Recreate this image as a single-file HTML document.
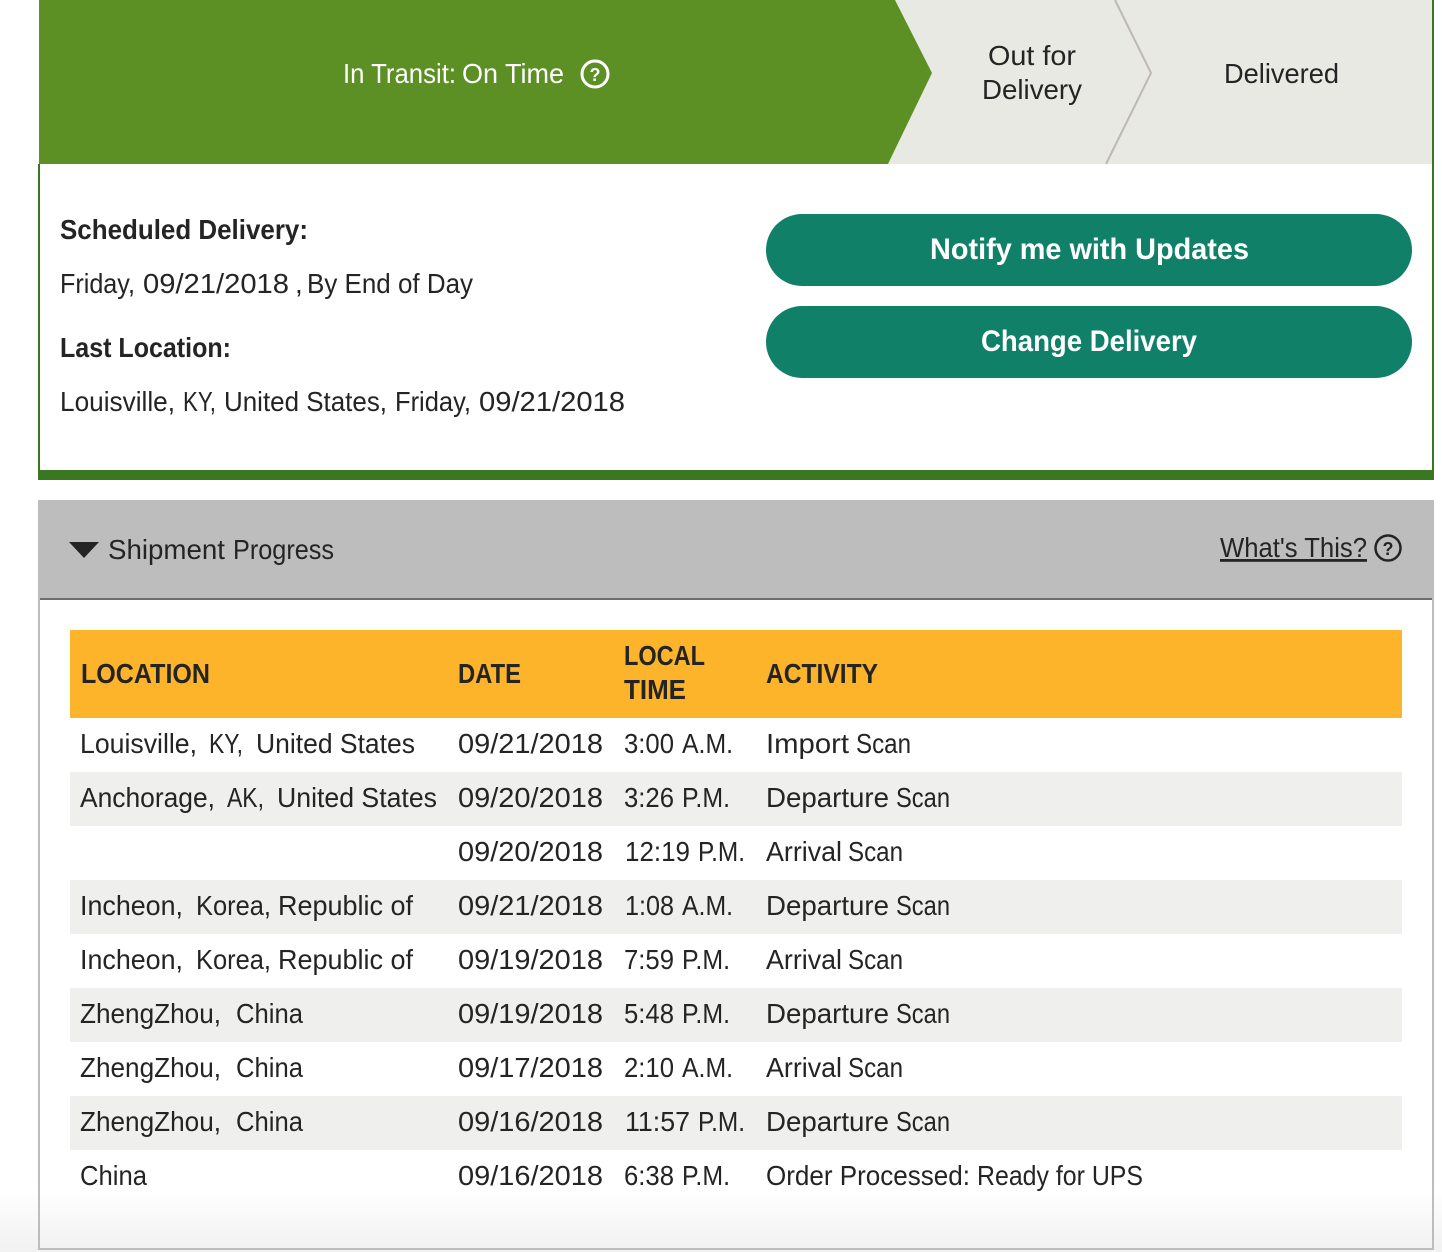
<!DOCTYPE html>
<html lang="en">
<head>
<meta charset="utf-8">
<title>Shipment Progress</title>
<style>
html,body{margin:0;padding:0;width:1442px;height:1252px;overflow:hidden;background:#fff}
svg{display:block}
text{font-family:"Liberation Sans",Arial,sans-serif;font-size:28px;fill:#242424;transform:translateY(-1px)}
.b{font-weight:bold}
.w{fill:#fff}
text.q{transform:none;font-size:18px;font-weight:bold}
</style>
</head>
<body>
<svg width="1442" height="1252" viewBox="0 0 1442 1252" xmlns="http://www.w3.org/2000/svg">
<defs>
<linearGradient id="fade" x1="0" y1="0" x2="0" y2="1">
<stop offset="0" stop-color="#fff"/>
<stop offset="1" stop-color="#f1f1f1"/>
</linearGradient>
</defs>
<rect width="1442" height="1252" fill="#fff"/>
<rect x="0" y="1190" width="1442" height="62" fill="url(#fade)"/>

<!-- Status tracker -->
<rect x="39" y="0" width="1394" height="164" fill="#e9e9e4"/>
<polygon points="39,0 895,0 932,73 888,164 39,164" fill="#5c9025"/>
<polyline points="1115,0 1151,73 1106,164" fill="none" stroke="#bdb8b1" stroke-width="2"/>
<text class="w" x="343" y="84" textLength="113" lengthAdjust="spacingAndGlyphs">In Transit:</text>
<text class="w" x="462" y="84" textLength="102" lengthAdjust="spacingAndGlyphs">On Time</text>
<circle cx="595" cy="74" r="13" fill="none" stroke="#fff" stroke-width="3"/>
<text class="q w" x="595" y="81" text-anchor="middle">?</text>
<text x="988" y="66" textLength="88" lengthAdjust="spacingAndGlyphs">Out for</text>
<text x="982" y="100" textLength="100" lengthAdjust="spacingAndGlyphs">Delivery</text>
<text x="1224" y="84" textLength="115" lengthAdjust="spacingAndGlyphs">Delivered</text>

<!-- Summary panel -->
<rect x="38" y="164" width="2" height="306" fill="#3a7722"/>
<rect x="1432" y="0" width="2" height="470" fill="#3a7722"/>
<rect x="38" y="470" width="1396" height="10" fill="#3a7722"/>
<text class="b" x="60" y="240" textLength="248" lengthAdjust="spacingAndGlyphs">Scheduled Delivery:</text>
<text x="60" y="294" textLength="75" lengthAdjust="spacingAndGlyphs">Friday,</text>
<text x="143" y="294" textLength="146" lengthAdjust="spacingAndGlyphs">09/21/2018</text>
<text x="295" y="294">,</text>
<text x="307" y="294" textLength="166" lengthAdjust="spacingAndGlyphs">By End of Day</text>
<text class="b" x="60" y="358" textLength="171" lengthAdjust="spacingAndGlyphs">Last Location:</text>
<text x="60" y="412" textLength="115" lengthAdjust="spacingAndGlyphs">Louisville,</text>
<text x="183" y="412" textLength="33" lengthAdjust="spacingAndGlyphs">KY,</text>
<text x="224" y="412" textLength="163" lengthAdjust="spacingAndGlyphs">United States,</text>
<text x="395" y="412" textLength="76" lengthAdjust="spacingAndGlyphs">Friday,</text>
<text x="479" y="412" textLength="146" lengthAdjust="spacingAndGlyphs">09/21/2018</text>
<rect x="766" y="214" width="646" height="72" rx="36" ry="36" fill="#118069"/>
<rect x="766" y="306" width="646" height="72" rx="36" ry="36" fill="#118069"/>
<text class="b w" x="930" y="260" textLength="319" lengthAdjust="spacingAndGlyphs" style="font-size:30px">Notify me with Updates</text>
<text class="b w" x="981" y="352" textLength="216" lengthAdjust="spacingAndGlyphs" style="font-size:30px">Change Delivery</text>

<!-- Shipment progress panel -->
<rect x="38" y="500" width="1396" height="98" fill="#bdbdbd"/>
<rect x="38" y="598" width="2" height="652" fill="#bdbdbd"/>
<rect x="1432" y="598" width="2" height="652" fill="#bdbdbd"/>
<rect x="38" y="1248" width="1396" height="2" fill="#bdbdbd"/>
<rect x="40" y="598" width="1392" height="2" fill="#6e6e6e"/>
<polygon points="69,542 99,542 84,558" fill="#242424"/>
<text x="108" y="560" textLength="117" lengthAdjust="spacingAndGlyphs">Shipment</text>
<text x="233" y="560" textLength="101" lengthAdjust="spacingAndGlyphs">Progress</text>
<text x="1220" y="558" textLength="147" lengthAdjust="spacingAndGlyphs" text-decoration="underline">What's This?</text>
<circle cx="1388" cy="548" r="12.5" fill="none" stroke="#242424" stroke-width="2.5"/>
<text class="q" x="1388" y="555" text-anchor="middle">?</text>

<!-- Table -->
<rect x="70" y="630" width="1332" height="88" fill="#fdb32a"/>
<rect x="70" y="772" width="1332" height="54" fill="#efefed"/>
<rect x="70" y="880" width="1332" height="54" fill="#efefed"/>
<rect x="70" y="988" width="1332" height="54" fill="#efefed"/>
<rect x="70" y="1096" width="1332" height="54" fill="#efefed"/>

<text class="b" x="81" y="684" textLength="129" lengthAdjust="spacingAndGlyphs">LOCATION</text>
<text class="b" x="458" y="684" textLength="63" lengthAdjust="spacingAndGlyphs">DATE</text>
<text class="b" x="624" y="666" textLength="81" lengthAdjust="spacingAndGlyphs">LOCAL</text>
<text class="b" x="624" y="700" textLength="62" lengthAdjust="spacingAndGlyphs">TIME</text>
<text class="b" x="766" y="684" textLength="112" lengthAdjust="spacingAndGlyphs">ACTIVITY</text>

<text x="80" y="754" textLength="117" lengthAdjust="spacingAndGlyphs">Louisville,</text>
<text x="209" y="754" textLength="34" lengthAdjust="spacingAndGlyphs">KY,</text>
<text x="256" y="754" textLength="159" lengthAdjust="spacingAndGlyphs">United States</text>
<text x="458" y="754" textLength="145" lengthAdjust="spacingAndGlyphs">09/21/2018</text>
<text x="624" y="754" textLength="50" lengthAdjust="spacingAndGlyphs">3:00</text>
<text x="682" y="754" textLength="51" lengthAdjust="spacingAndGlyphs">A.M.</text>
<text x="766" y="754" textLength="83" lengthAdjust="spacingAndGlyphs">Import</text>
<text x="856" y="754" textLength="55" lengthAdjust="spacingAndGlyphs">Scan</text>

<text x="80" y="808" textLength="135" lengthAdjust="spacingAndGlyphs">Anchorage,</text>
<text x="227" y="808" textLength="37" lengthAdjust="spacingAndGlyphs">AK,</text>
<text x="277" y="808" textLength="160" lengthAdjust="spacingAndGlyphs">United States</text>
<text x="458" y="808" textLength="145" lengthAdjust="spacingAndGlyphs">09/20/2018</text>
<text x="624" y="808" textLength="50" lengthAdjust="spacingAndGlyphs">3:26</text>
<text x="682" y="808" textLength="48" lengthAdjust="spacingAndGlyphs">P.M.</text>
<text x="766" y="808" textLength="123" lengthAdjust="spacingAndGlyphs">Departure</text>
<text x="896" y="808" textLength="54" lengthAdjust="spacingAndGlyphs">Scan</text>

<text x="458" y="862" textLength="145" lengthAdjust="spacingAndGlyphs">09/20/2018</text>
<text x="625" y="862" textLength="65" lengthAdjust="spacingAndGlyphs">12:19</text>
<text x="698" y="862" textLength="47" lengthAdjust="spacingAndGlyphs">P.M.</text>
<text x="766" y="862" textLength="76" lengthAdjust="spacingAndGlyphs">Arrival</text>
<text x="848" y="862" textLength="55" lengthAdjust="spacingAndGlyphs">Scan</text>

<text x="80" y="916" textLength="103" lengthAdjust="spacingAndGlyphs">Incheon,</text>
<text x="196" y="916" textLength="75" lengthAdjust="spacingAndGlyphs">Korea,</text>
<text x="278" y="916" textLength="135" lengthAdjust="spacingAndGlyphs">Republic of</text>
<text x="458" y="916" textLength="145" lengthAdjust="spacingAndGlyphs">09/21/2018</text>
<text x="625" y="916" textLength="49" lengthAdjust="spacingAndGlyphs">1:08</text>
<text x="682" y="916" textLength="51" lengthAdjust="spacingAndGlyphs">A.M.</text>
<text x="766" y="916" textLength="123" lengthAdjust="spacingAndGlyphs">Departure</text>
<text x="896" y="916" textLength="54" lengthAdjust="spacingAndGlyphs">Scan</text>

<text x="80" y="970" textLength="103" lengthAdjust="spacingAndGlyphs">Incheon,</text>
<text x="196" y="970" textLength="75" lengthAdjust="spacingAndGlyphs">Korea,</text>
<text x="278" y="970" textLength="135" lengthAdjust="spacingAndGlyphs">Republic of</text>
<text x="458" y="970" textLength="145" lengthAdjust="spacingAndGlyphs">09/19/2018</text>
<text x="624" y="970" textLength="50" lengthAdjust="spacingAndGlyphs">7:59</text>
<text x="682" y="970" textLength="48" lengthAdjust="spacingAndGlyphs">P.M.</text>
<text x="766" y="970" textLength="76" lengthAdjust="spacingAndGlyphs">Arrival</text>
<text x="848" y="970" textLength="55" lengthAdjust="spacingAndGlyphs">Scan</text>

<text x="80" y="1024" textLength="141" lengthAdjust="spacingAndGlyphs">ZhengZhou,</text>
<text x="236" y="1024" textLength="67" lengthAdjust="spacingAndGlyphs">China</text>
<text x="458" y="1024" textLength="145" lengthAdjust="spacingAndGlyphs">09/19/2018</text>
<text x="624" y="1024" textLength="50" lengthAdjust="spacingAndGlyphs">5:48</text>
<text x="682" y="1024" textLength="48" lengthAdjust="spacingAndGlyphs">P.M.</text>
<text x="766" y="1024" textLength="123" lengthAdjust="spacingAndGlyphs">Departure</text>
<text x="896" y="1024" textLength="54" lengthAdjust="spacingAndGlyphs">Scan</text>

<text x="80" y="1078" textLength="141" lengthAdjust="spacingAndGlyphs">ZhengZhou,</text>
<text x="236" y="1078" textLength="67" lengthAdjust="spacingAndGlyphs">China</text>
<text x="458" y="1078" textLength="145" lengthAdjust="spacingAndGlyphs">09/17/2018</text>
<text x="624" y="1078" textLength="50" lengthAdjust="spacingAndGlyphs">2:10</text>
<text x="682" y="1078" textLength="51" lengthAdjust="spacingAndGlyphs">A.M.</text>
<text x="766" y="1078" textLength="76" lengthAdjust="spacingAndGlyphs">Arrival</text>
<text x="848" y="1078" textLength="55" lengthAdjust="spacingAndGlyphs">Scan</text>

<text x="80" y="1132" textLength="141" lengthAdjust="spacingAndGlyphs">ZhengZhou,</text>
<text x="236" y="1132" textLength="67" lengthAdjust="spacingAndGlyphs">China</text>
<text x="458" y="1132" textLength="145" lengthAdjust="spacingAndGlyphs">09/16/2018</text>
<text x="625" y="1132" textLength="65" lengthAdjust="spacingAndGlyphs">11:57</text>
<text x="698" y="1132" textLength="47" lengthAdjust="spacingAndGlyphs">P.M.</text>
<text x="766" y="1132" textLength="123" lengthAdjust="spacingAndGlyphs">Departure</text>
<text x="896" y="1132" textLength="54" lengthAdjust="spacingAndGlyphs">Scan</text>

<text x="80" y="1186" textLength="67" lengthAdjust="spacingAndGlyphs">China</text>
<text x="458" y="1186" textLength="145" lengthAdjust="spacingAndGlyphs">09/16/2018</text>
<text x="624" y="1186" textLength="50" lengthAdjust="spacingAndGlyphs">6:38</text>
<text x="682" y="1186" textLength="48" lengthAdjust="spacingAndGlyphs">P.M.</text>
<text x="766" y="1186" textLength="204" lengthAdjust="spacingAndGlyphs">Order Processed:</text>
<text x="977" y="1186" textLength="166" lengthAdjust="spacingAndGlyphs">Ready for UPS</text>
</svg>
</body>
</html>
